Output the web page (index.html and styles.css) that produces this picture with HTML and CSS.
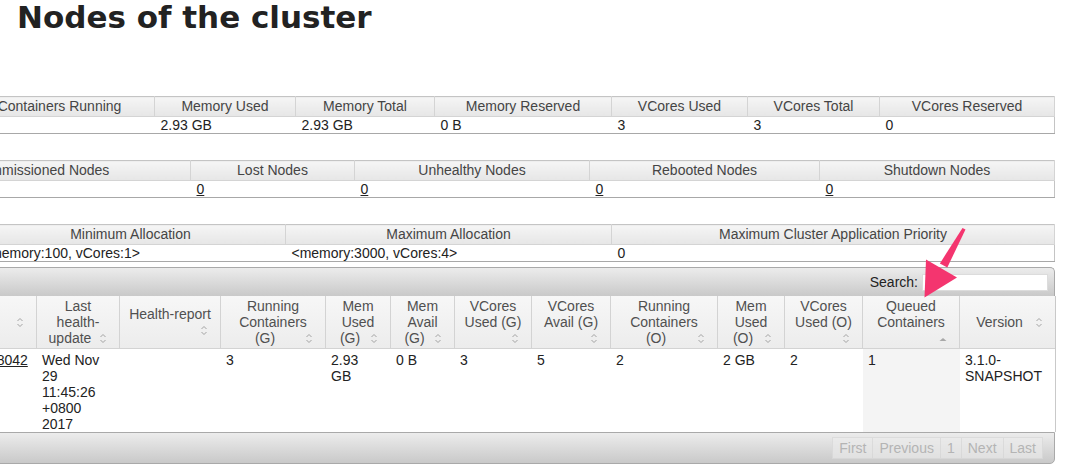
FILE: index.html
```html
<!DOCTYPE html>
<html>
<head>
<meta charset="utf-8">
<title>Nodes of the cluster</title>
<link rel="stylesheet" href="styles.css">
</head>
<body>
<h1 class="title">Nodes of the cluster</h1>
<div class="content">
  <table class="info metrics">
    <colgroup>
      <col class="m-cont"><col class="m-mused"><col class="m-mtotal"><col class="m-mres"><col class="m-vused"><col class="m-vtotal"><col class="m-vres">
    </colgroup>
    <thead>
      <tr><th>Containers Running</th><th>Memory Used</th><th>Memory Total</th><th>Memory Reserved</th><th>VCores Used</th><th>VCores Total</th><th>VCores Reserved</th></tr>
    </thead>
    <tbody>
      <tr><td>3</td><td>2.93 GB</td><td>2.93 GB</td><td>0 B</td><td>3</td><td>3</td><td>0</td></tr>
    </tbody>
  </table>

  <table class="info nodestats">
    <colgroup>
      <col class="n-decom"><col class="n-lost"><col class="n-unh"><col class="n-reb"><col class="n-shut">
    </colgroup>
    <thead>
      <tr><th>Decommissioned Nodes</th><th>Lost Nodes</th><th>Unhealthy Nodes</th><th>Rebooted Nodes</th><th>Shutdown Nodes</th></tr>
    </thead>
    <tbody>
      <tr><td><a href="#">0</a></td><td><a href="#">0</a></td><td><a href="#">0</a></td><td><a href="#">0</a></td><td><a href="#">0</a></td></tr>
    </tbody>
  </table>

  <table class="info sched">
    <colgroup>
      <col class="s-min"><col class="s-max"><col class="s-prio">
    </colgroup>
    <thead>
      <tr><th>Minimum Allocation</th><th>Maximum Allocation</th><th>Maximum Cluster Application Priority</th></tr>
    </thead>
    <tbody>
      <tr><td>&lt;memory:100, vCores:1&gt;</td><td>&lt;memory:3000, vCores:4&gt;</td><td>0</td></tr>
    </tbody>
  </table>

  <div class="dt-wrapper">
    <div class="toolbar toolbar-top">
      <label class="search">Search: <input type="text" class="search-input"></label>
    </div>
    <table class="nodes">
      <colgroup>
        <col class="c-addr"><col class="c-last"><col class="c-health"><col class="c-rcg"><col class="c-mug"><col class="c-mag"><col class="c-vug"><col class="c-vag"><col class="c-rco"><col class="c-muo"><col class="c-vuo"><col class="c-queued"><col class="c-ver">
      </colgroup>
      <thead>
        <tr>
          <th>Node HTTP Address<span class="si"><svg viewBox="0 0 16 16" width="16" height="16"><path d="M5.5 7 L8 4.5 L10.5 7 M5.5 10 L8 12.5 L10.5 10" fill="none" stroke="#a3a3a3" stroke-width="1"/></svg></span></th>
          <th>Last health-update<span class="si"><svg viewBox="0 0 16 16" width="16" height="16"><path d="M5.5 7 L8 4.5 L10.5 7 M5.5 10 L8 12.5 L10.5 10" fill="none" stroke="#a3a3a3" stroke-width="1"/></svg></span></th>
          <th>Health-report<span class="si"><svg viewBox="0 0 16 16" width="16" height="16"><path d="M5.5 7 L8 4.5 L10.5 7 M5.5 10 L8 12.5 L10.5 10" fill="none" stroke="#a3a3a3" stroke-width="1"/></svg></span></th>
          <th>Running Containers (G)<span class="si"><svg viewBox="0 0 16 16" width="16" height="16"><path d="M5.5 7 L8 4.5 L10.5 7 M5.5 10 L8 12.5 L10.5 10" fill="none" stroke="#a3a3a3" stroke-width="1"/></svg></span></th>
          <th>Mem Used (G)<span class="si"><svg viewBox="0 0 16 16" width="16" height="16"><path d="M5.5 7 L8 4.5 L10.5 7 M5.5 10 L8 12.5 L10.5 10" fill="none" stroke="#a3a3a3" stroke-width="1"/></svg></span></th>
          <th>Mem Avail (G)<span class="si"><svg viewBox="0 0 16 16" width="16" height="16"><path d="M5.5 7 L8 4.5 L10.5 7 M5.5 10 L8 12.5 L10.5 10" fill="none" stroke="#a3a3a3" stroke-width="1"/></svg></span></th>
          <th>VCores Used (G)<span class="si"><svg viewBox="0 0 16 16" width="16" height="16"><path d="M5.5 7 L8 4.5 L10.5 7 M5.5 10 L8 12.5 L10.5 10" fill="none" stroke="#a3a3a3" stroke-width="1"/></svg></span></th>
          <th>VCores Avail (G)<span class="si"><svg viewBox="0 0 16 16" width="16" height="16"><path d="M5.5 7 L8 4.5 L10.5 7 M5.5 10 L8 12.5 L10.5 10" fill="none" stroke="#a3a3a3" stroke-width="1"/></svg></span></th>
          <th>Running Containers (O)<span class="si"><svg viewBox="0 0 16 16" width="16" height="16"><path d="M5.5 7 L8 4.5 L10.5 7 M5.5 10 L8 12.5 L10.5 10" fill="none" stroke="#a3a3a3" stroke-width="1"/></svg></span></th>
          <th>Mem Used (O)<span class="si"><svg viewBox="0 0 16 16" width="16" height="16"><path d="M5.5 7 L8 4.5 L10.5 7 M5.5 10 L8 12.5 L10.5 10" fill="none" stroke="#a3a3a3" stroke-width="1"/></svg></span></th>
          <th>VCores Used (O)<span class="si"><svg viewBox="0 0 16 16" width="16" height="16"><path d="M5.5 7 L8 4.5 L10.5 7 M5.5 10 L8 12.5 L10.5 10" fill="none" stroke="#a3a3a3" stroke-width="1"/></svg></span></th>
          <th class="sorted">Queued Containers<span class="si"><svg viewBox="0 0 16 16" width="16" height="16"><path d="M4.5 11 L8 8 L11.5 11 Z" fill="#a8a8a8"/></svg></span></th>
          <th>Version<span class="si"><svg viewBox="0 0 16 16" width="16" height="16"><path d="M5.5 7 L8 4.5 L10.5 7 M5.5 10 L8 12.5 L10.5 10" fill="none" stroke="#a3a3a3" stroke-width="1"/></svg></span></th>
        </tr>
      </thead>
      <tbody>
        <tr>
          <td><a href="#">zhangsandeMacBook-Pro.local:8042</a></td>
          <td>Wed Nov 29 11:45:26 +0800 2017</td>
          <td></td>
          <td>3</td>
          <td>2.93 GB</td>
          <td>0 B</td>
          <td>3</td>
          <td>5</td>
          <td>2</td>
          <td>2 GB</td>
          <td>2</td>
          <td class="sorted">1</td>
          <td>3.1.0-SNAPSHOT</td>
        </tr>
      </tbody>
    </table>
    <div class="toolbar toolbar-bottom">
      <div class="paging">
        <span class="pg">First</span><span class="pg">Previous</span><span class="pg">1</span><span class="pg">Next</span><span class="pg">Last</span>
      </div>
    </div>
  </div>
</div>
<svg class="arrow" viewBox="0 0 60 85" width="60" height="85">
  <polygon points="47.5,8 50.5,9.6 32.3,47.4 24.9,43.4" fill="#f4356f"/>
  <polygon points="9.5,77.5 42,57.5 11,39.5" fill="#f4356f"/>
</svg>
</body>
</html>
```

FILE: styles.css
```css
html, body {
  margin: 0;
  padding: 0;
}

body {
  position: relative;
  width: 1066px;
  height: 469px;
  overflow: hidden;
  background: #ffffff;
  font-family: "Liberation Sans", Arial, sans-serif;
  font-size: 14px;
  color: #222222;
}

.title {
  margin: 0;
  padding-left: 17px;
  font-family: "DejaVu Sans", Verdana, sans-serif;
  font-weight: bold;
  font-size: 31px;
  line-height: 34px;
  color: #222222;
}

.content {
  margin-left: -206px;
  width: 1261px;
  display: flex;
  flex-direction: column;
  align-items: flex-end;
}

a {
  color: #222222;
  text-decoration: underline;
}

/* summary tables */
.info {
  table-layout: fixed;
  border-collapse: collapse;
  border: 1px solid #c4c4c4;
  border-bottom-color: #a8a8a8;
}

.info th {
  padding: 0 5px;
  height: 19px;
  line-height: 19px;
  font-weight: normal;
  color: #454545;
  white-space: nowrap;
  background: linear-gradient(#f5f5f5, #e6e6e6);
  border-right: 1px solid #d4d4d4;
  border-bottom: 1px solid #d4d4d4;
  text-align: center;
}

.info td {
  padding: 0 6px;
  height: 16px;
  line-height: 16px;
  text-align: left;
  white-space: nowrap;
  background: #ffffff;
}

.metrics { width: 1090px; margin-top: 62px; }
.m-cont { width: 190px; }
.m-mused { width: 141px; }
.m-mtotal { width: 139px; }
.m-mres { width: 177px; }
.m-vused { width: 136px; }
.m-vtotal { width: 132px; }
.m-vres { width: 175px; }

.nodestats { width: 1178px; margin-top: 26px; }
.n-decom { width: 314px; }
.n-lost { width: 164px; }
.n-unh { width: 235px; }
.n-reb { width: 230px; }
.n-shut { width: 235px; }

.sched { width: 1079px; margin-top: 26px; }
.s-min { width: 310px; }
.s-max { width: 326px; }
.s-prio { width: 443px; }

/* data table wrapper */
.dt-wrapper {
  width: 1261px;
  margin-top: 5px;
}

.toolbar {
  box-sizing: border-box;
  display: flex;
  justify-content: flex-end;
  align-items: center;
  border: 1px solid #a9a9a9;
  background: linear-gradient(#ececec, #c9c9c9);
}

.toolbar-top {
  height: 29px;
  border-bottom: 0;
  border-radius: 0 5px 0 0;
  padding-right: 6px;
}

.search {
  color: #222222;
  font-size: 14px;
  display: flex;
  align-items: center;
  gap: 4px;
}

.search-input {
  box-sizing: border-box;
  width: 126px;
  height: 17px;
  margin: 0;
  padding: 0 3px;
  border: 1px solid #dcdcdc;
  background: #ffffff;
  font: inherit;
}

.nodes {
  width: 1261px;
  table-layout: fixed;
  border-collapse: separate;
  border-spacing: 0;
  border-right: 1px solid #c9c9c9;
}

.c-addr { width: 243px; }
.c-last { width: 83px; }
.c-health { width: 101px; }
.c-rcg { width: 105px; }
.c-mug { width: 65px; }
.c-mag { width: 64px; }
.c-vug { width: 77px; }
.c-vag { width: 79px; }
.c-rco { width: 107px; }
.c-muo { width: 67px; }
.c-vuo { width: 78px; }
.c-queued { width: 97px; }
.c-ver { width: 95px; }

.nodes th {
  padding: 2px 8px 2px 8px;
  font-weight: normal;
  color: #505050;
  line-height: 16px;
  text-align: center;
  vertical-align: middle;
  background: linear-gradient(#f7f7f7, #ececec);
  border-right: 1px solid #d3d3d3;
  border-bottom: 1px solid #d3d3d3;
}

.nodes th:last-child {
  border-right: 0;
}

.si {
  float: right;
  width: 16px;
  height: 16px;
}

.si svg {
  display: block;
}

.nodes td {
  padding: 3px 10px 0 5px;
  line-height: 16px;
  vertical-align: top;
  text-align: left;
  height: 80px;
  background: #ffffff;
  white-space: normal;
}

.nodes td:first-child {
  white-space: nowrap;
}

.nodes td.sorted {
  background: #f4f4f4;
}

.toolbar-bottom {
  height: 32px;
  border-radius: 0 0 5px 0;
  padding-right: 11px;
}

.paging {
  display: flex;
}

.pg {
  padding: 2px 6px;
  line-height: 16px;
  color: #b4b4b4;
  background: rgba(236, 236, 236, 0.6);
  border-top: 1px solid rgba(205, 205, 205, 0.45);
  border-bottom: 1px solid rgba(205, 205, 205, 0.45);
  border-left: 1px solid rgba(205, 205, 205, 0.45);
}

.pg:last-child {
  border-right: 1px solid rgba(205, 205, 205, 0.45);
}

.arrow {
  position: absolute;
  left: 915px;
  top: 220px;
  overflow: visible;
}
```
